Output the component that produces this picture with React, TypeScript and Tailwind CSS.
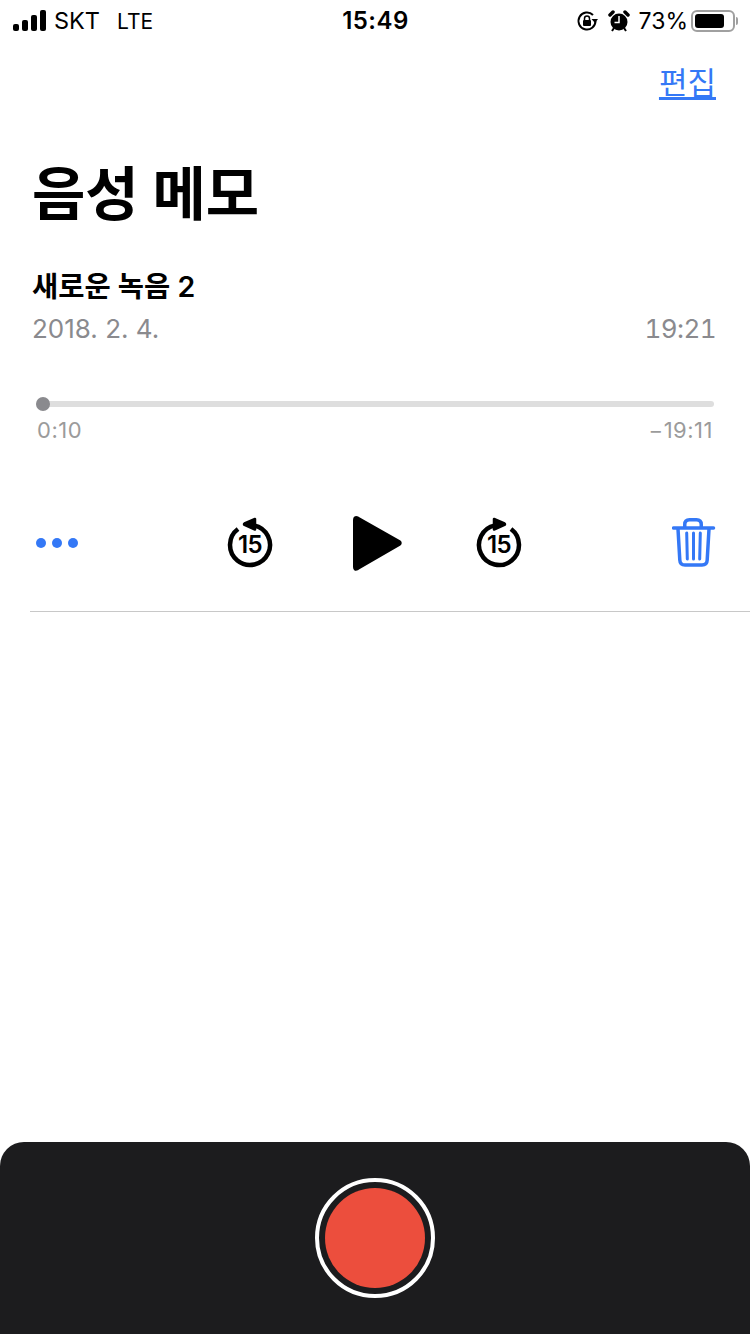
const Replay = ({ flip }: { flip?: boolean }) => (
  <div className="relative w-[48px] h-[52px]">
    <svg viewBox="0 0 48 52" className={`absolute inset-0 w-full h-full ${flip ? '-scale-x-100' : ''}`} fill="none">
      <path d="M28 8.4 A20 20 0 1 1 12 12" stroke="#000" strokeWidth="4.5" />
      <path d="M29 2 L29 12.5 L18.5 7.9 Q17.5 7.2 18.5 6.5 Z" fill="#000" stroke="#000" strokeWidth="2.5" strokeLinejoin="round" />
    </svg>
    <span className="absolute left-0 right-0 top-[13px] text-center text-[24px] leading-[30px] font-semibold tracking-[-0.5px] text-black font-['Inter']">15</span>
  </div>
)

export default function App() {
  return (
    <div className="relative w-[750px] h-[1334px] bg-white overflow-hidden flex flex-col font-['Inter','Noto_Sans_CJK_KR',sans-serif]">
      {/* Status bar */}
      <div className="h-[42px] flex items-center justify-between pl-[13px] pr-[12px] text-black shrink-0">
        <div className="flex items-center w-[250px]">
          <svg width="34" height="22" viewBox="0 0 34 22" fill="#000">
            <rect x="0" y="14" width="6" height="7" rx="2" />
            <rect x="9" y="10" width="6" height="11" rx="2" />
            <rect x="18" y="5" width="6" height="16" rx="2" />
            <rect x="27" y="0" width="6" height="21" rx="2" />
          </svg>
          <span className="ml-[7px] text-[23.5px] leading-none">SKT</span>
          <span className="ml-[17px] text-[21px] leading-none">LTE</span>
        </div>
        <span className="text-[24px] font-semibold leading-none tracking-[0.5px]">15:49</span>
        <div className="flex items-center justify-end w-[250px]">
          <svg width="22" height="22" viewBox="0 0 22 22" fill="none" className="mr-[10px]">
            <path d="M17 5 A8.5 8.5 0 1 0 19.5 11" stroke="#000" strokeWidth="2" />
            <path d="M15.5 9 L22 9 L19 13 Z" fill="#000" />
            <rect x="7" y="10" width="8" height="6" rx="1" fill="#000" />
            <path d="M8.5 10 V8.5 a2.5 2.5 0 0 1 5 0 V10" stroke="#000" strokeWidth="1.5" />
          </svg>
          <svg width="22" height="24" viewBox="0 0 22 24" className="mr-[9px]">
            <circle cx="11" cy="13" r="8.5" fill="#000" />
            <path d="M2 6 L5 3 M20 6 L17 3" stroke="#000" strokeWidth="3.5" strokeLinecap="round" />
            <path d="M11 7 V13.5 H6.5" stroke="#fff" strokeWidth="1.5" fill="none" />
            <path d="M4 22 L6 19 M18 22 L16 19" stroke="#000" strokeWidth="2" />
          </svg>
          <span className="text-[23px] leading-none mr-[3px]">73%</span>
          <div className="w-[44px] h-[22px] rounded-[6px] border-2 border-[#a0a0a0] p-[2px]">
            <div className="w-[29px] h-full rounded-[3px] bg-black" />
          </div>
          <div className="ml-[1px] w-[2px] h-[8px] rounded-r-full bg-[#a0a0a0]" />
        </div>
      </div>

      {/* Edit */}
      <div className="mt-[20px] h-[42px] flex justify-end pr-[34px] shrink-0">
        <a className="text-[31px] leading-[42px] text-[#3478f6] underline underline-offset-[3px]">편집</a>
      </div>

      <h1 className="mt-[52px] pl-[32px] text-[58px] leading-[76px] font-bold text-black shrink-0">음성 메모</h1>

      {/* Recording */}
      <div className="mt-[37px] pl-[32px] pr-[34px] shrink-0">
        <div className="text-[28.5px] leading-[36px] font-semibold text-black">새로운 녹음 2</div>
        <div className="mt-[7px] flex justify-between text-[26px] leading-[34px] text-[#8a8a8e]">
          <span>2018. 2. 4.</span>
          <span className="tabular-nums tracking-[-0.6px]">19:21</span>
        </div>
      </div>

      {/* Scrubber */}
      <div className="mt-[55px] pl-[36px] pr-[36px] shrink-0">
        <div className="relative h-[6px] rounded-full bg-[#dedede]">
          <div className="absolute left-0 top-[-4px] w-[14px] h-[14px] rounded-full bg-[#8a8a8e]" />
        </div>
        <div className="mt-[9px] flex justify-between text-[22px] leading-[28px] text-[#9b9b9b] px-[1px] tracking-[0.5px]">
          <span>0:10</span>
          <span>−19:11</span>
        </div>
      </div>

      {/* Controls */}
      <div className="relative mt-[64px] h-[70px] shrink-0">
        <div className="absolute left-[36px] top-[30px] flex gap-[6px]">
          <div className="w-[10px] h-[10px] rounded-full bg-[#3478f6]" />
          <div className="w-[10px] h-[10px] rounded-full bg-[#3478f6]" />
          <div className="w-[10px] h-[10px] rounded-full bg-[#3478f6]" />
        </div>
        <div className="absolute left-[226px] top-[9px]"><Replay /></div>
        <svg width="52" height="58" viewBox="0 0 52 58" className="absolute left-[352px] top-[7px]">
          <path d="M6 2.5 L47.5 26 Q50 28 47.5 30 L6 54 Q2 56 2 52 V5 Q2 1 6 2.5 Z" fill="#000" stroke="#000" strokeWidth="2" strokeLinejoin="round" />
        </svg>
        <div className="absolute left-[475px] top-[9px]"><Replay flip /></div>
        <svg width="44" height="52" viewBox="0 0 44 52" fill="none" stroke="#3478f6" className="absolute left-[672px] top-[10px]">
          <path d="M1.5 10 H41.5" strokeWidth="3.5" strokeLinecap="round" />
          <path d="M12.75 9 V6.5 Q12.75 1.75 17.5 1.75 H24.5 Q29.25 1.75 29.25 6.5 V9" strokeWidth="3.5" />
          <path d="M6 11 L7.8 42 Q8 47 13 47 H30 Q35 47 35.2 42 L37 11" strokeWidth="3.5" />
          <path d="M14.7 15 L15.3 41 M21.5 15 V41 M28.3 15 L27.7 41" strokeWidth="3" strokeLinecap="round" />
        </svg>
      </div>

      {/* Divider */}
      <div className="mt-[33px] ml-[30px] h-px bg-[#c8c8c8] shrink-0" />

      <div className="flex-1" />

      {/* Record bar */}
      <div className="h-[192px] bg-[#1c1c1e] rounded-t-[24px] flex justify-center pt-[36px] shrink-0">
        <div className="w-[120px] h-[120px] rounded-full border-[4px] border-white flex items-center justify-center">
          <div className="w-[100px] h-[100px] rounded-full bg-[#ec4e3d]" />
        </div>
      </div>
    </div>
  )
}
